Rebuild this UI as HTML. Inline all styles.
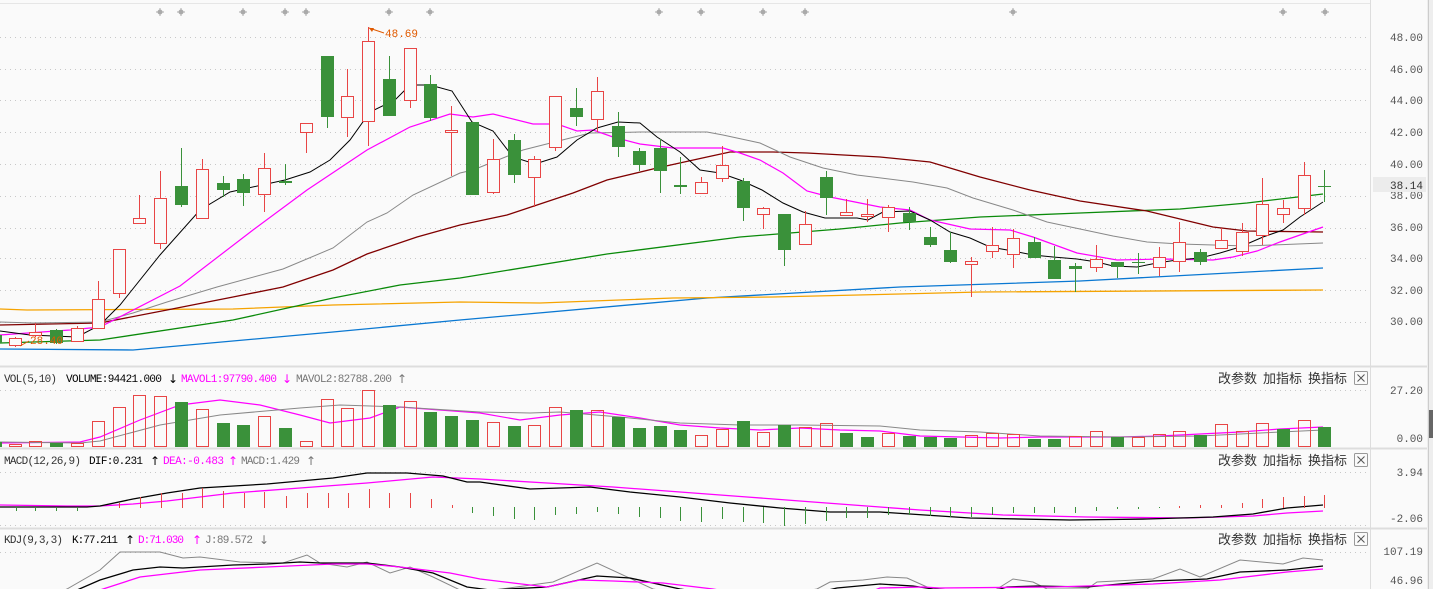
<!DOCTYPE html>
<html><head><meta charset="utf-8"><style>
html,body{margin:0;padding:0;background:#fafafa;width:1433px;height:589px;overflow:hidden}
svg{display:block}
text{font-family:"Liberation Mono","Noto Sans CJK SC",monospace;font-size:11px}
.cn{font-family:"Liberation Sans","Noto Sans CJK SC",sans-serif;font-size:13px;fill:#333}
.ax{fill:#555;text-anchor:end}
.ar{font-family:"DejaVu Sans",sans-serif;font-size:12px}
</style></head><body>
<svg id="s" width="1433" height="589" xmlns="http://www.w3.org/2000/svg">
<rect width="1433" height="589" fill="#fafafa"/>
<line x1="0" y1="3.5" x2="1370" y2="3.5" stroke="#e6e6e6"/>
<g id="grid" stroke="#c8c8c8" stroke-dasharray="1,4"></g>
<line x1="1370.5" y1="0" x2="1370.5" y2="589" stroke="#ddd"/>
<line x1="0" y1="366.5" x2="1428" y2="366.5" stroke="#ddd" stroke-width="2"/>
<line x1="0" y1="448.5" x2="1428" y2="448.5" stroke="#ddd" stroke-width="2"/>
<line x1="0" y1="528.5" x2="1428" y2="528.5" stroke="#ddd" stroke-width="2"/>
<rect x="1427" y="0" width="6" height="589" fill="#eee"/>
<line x1="1428.5" y1="0" x2="1428.5" y2="589" stroke="#ccc"/>
<rect x="1429" y="410" width="4" height="28" fill="#666"/>
<g id="lines" fill="none"></g>
<g id="cand"></g>
<g class="ax">
<text x="1423" y="41">48.00</text><text x="1423" y="73">46.00</text><text x="1423" y="104">44.00</text>
<text x="1423" y="136">42.00</text><text x="1423" y="168">40.00</text><text x="1423" y="199">38.00</text>
<text x="1423" y="231">36.00</text><text x="1423" y="262">34.00</text><text x="1423" y="294">32.00</text>
<text x="1423" y="325">30.00</text>
<text x="1423" y="394">27.20</text><text x="1423" y="442">0.00</text>
<text x="1423" y="476">3.94</text><text x="1423" y="522">-2.06</text>
<text x="1423" y="555">107.19</text><text x="1423" y="584">46.96</text>
</g>
<rect x="1373" y="177" width="53" height="15" fill="#ececec"/>
<text x="1423" y="189" style="text-anchor:end;fill:#333">38.14</text>
<line x1="369" y1="28" x2="384" y2="33" stroke="#e05a00"/>
<path d="M369 28 l5 0 l-2 4z" fill="#e05a00"/>
<text x="385" y="37" fill="#e05a00">48.69</text>
<text x="30" y="344" fill="#e05a00">28.40</text>
<line x1="20" y1="346" x2="29" y2="341" stroke="#e05a00"/>
<text x="4" y="382" fill="#333" textLength="53" lengthAdjust="spacing">VOL(5,10)</text>
<text x="66" y="382" fill="#000" textLength="96" lengthAdjust="spacing">VOLUME:94421.000</text><text class="ar" x="168" y="383" fill="#000">↓</text>
<text x="181" y="382" fill="#f0f" textLength="96" lengthAdjust="spacing">MAVOL1:97790.400</text><text class="ar" x="282" y="383" fill="#f0f">↓</text>
<text x="296" y="382" fill="#777" textLength="96" lengthAdjust="spacing">MAVOL2:82788.200</text><text class="ar" x="397" y="383" fill="#777">↑</text>
<text x="4" y="464" fill="#333" textLength="77" lengthAdjust="spacing">MACD(12,26,9)</text>
<text x="89" y="464" fill="#000" textLength="54" lengthAdjust="spacing">DIF:0.231</text><text class="ar" x="150" y="465" fill="#000">↑</text>
<text x="163" y="464" fill="#f0f" textLength="61" lengthAdjust="spacing">DEA:-0.483</text><text class="ar" x="228" y="465" fill="#f0f">↑</text>
<text x="241" y="464" fill="#777" textLength="59" lengthAdjust="spacing">MACD:1.429</text><text class="ar" x="306" y="465" fill="#777">↑</text>
<text x="4" y="543" fill="#333" textLength="59" lengthAdjust="spacing">KDJ(9,3,3)</text>
<text x="72" y="543" fill="#000" textLength="46" lengthAdjust="spacing">K:77.211</text><text class="ar" x="125" y="544" fill="#000">↑</text>
<text x="138" y="543" fill="#f0f" textLength="46" lengthAdjust="spacing">D:71.030</text><text class="ar" x="192" y="544" fill="#f0f">↑</text>
<text x="205" y="543" fill="#777" textLength="48" lengthAdjust="spacing">J:89.572</text><text class="ar" x="259" y="544" fill="#777">↓</text>
<g id="btns"></g>
</svg>
<script>
var NS="http://www.w3.org/2000/svg",S=document.getElementById('s');
function el(p,t,a,txt){var e=document.createElementNS(NS,t);for(var k in a)e.setAttribute(k,a[k]);if(txt)e.textContent=txt;p.appendChild(e);return e;}
var G=document.getElementById('grid');
[37,69,100,132,164,196,228,258,290,322,390,472,525,552].forEach(function(y){el(G,'line',{x1:0,y1:y+.5,x2:1370,y2:y+.5});});
var B=document.getElementById('btns');
[[378,383],[460,465],[539,544]].forEach(function(r){
 el(B,'text',{x:1218,y:r[1],'class':'cn'},'改参数');
 el(B,'text',{x:1263,y:r[1],'class':'cn'},'加指标');
 el(B,'text',{x:1308,y:r[1],'class':'cn'},'换指标');
 el(B,'rect',{x:1354.5,y:r[0]-6.5,width:13,height:13,fill:'#fafafa',stroke:'#999',rx:1});
 el(B,'path',{d:'M1357.5 '+(r[0]-3.5)+'l7 7m0 -7l-7 7',stroke:'#555'});
});
[160,181,243,285,306,389,430,659,701,763,805,1013,1283,1325].forEach(function(x){
 el(B,'circle',{cx:x,cy:12,r:2.5,fill:'#aaa'});
 el(B,'path',{d:'M'+(x-4)+' 12h8M'+x+' 8v8',stroke:'#aaa'});
});
var L=document.getElementById('lines');
function pl(pts,c,w){el(L,'polyline',{points:pts,stroke:c,'stroke-width':w||1});}
pl("0,349 133,350 333,332 460,320 707,298 900,287 1080,281 1323,268","#0a78d2",1.3);
pl("0,309 27,310 233,309 333,305 460,302 540,303 673,298 773,297 900,294 980,292 1323,290","#f5a300",1.3);
pl("0,343 100,340 233,320 333,298 400,285 460,278 607,254 740,237 840,229 900,223 980,217 1080,213 1180,209 1247,203 1323,194","#0a8a0a",1.3);
pl("0,325 100,323 167,310 233,297 283,287 333,270 367,254 417,237 460,225 507,215 573,193 607,180 657,168 707,157 730,152 773,152 807,153 880,157 930,162 980,177 1030,190 1080,201 1147,211 1213,227 1247,231 1323,232","#800000",1.3);
pl("0,322 33,323 100,322 133,313 167,302 217,287 283,269 333,248 367,222 387,213 413,195 460,173 473,170 523,150 590,133 640,132 707,132 723,135 760,143 790,157 823,168 857,175 913,182 947,188 973,198 1013,210 1047,222 1080,229 1113,236 1147,242 1180,244 1247,246 1323,243","#888",1);
pl("0,335 70,330 100,327 180,286 253,230 307,190 367,150 410,127 450,114 473,117 493,114 533,124 557,124 577,131 593,130 613,137 640,144 673,148 723,148 740,153 760,160 783,173 807,191 830,197 860,203 880,207 910,210 930,220 970,229 1010,230 1033,237 1077,253 1117,260 1163,259 1213,260 1233,257 1257,251 1280,242 1300,235 1323,227","#f0f",1.2);
pl("0,331 30,335 77,337 100,325 120,305 160,255 200,210 230,192 285,180 310,172 330,160 350,140 370,112 395,100 410,85 430,85 452,91 472,122 493,131 513,157 535,164 557,157 577,140 597,128 618,122 640,123 657,137 680,152 700,170 720,173 740,180 762,190 783,203 803,212 825,218 857,218 868,220 883,212 910,211 930,220 950,232 970,238 990,247 1013,251 1033,255 1053,257 1077,259 1097,262 1113,266 1137,267 1157,263 1177,260 1200,258 1220,253 1240,247 1263,237 1283,230 1300,217 1323,202","#000",1);
pl("0,443 80,442 100,437 140,420 180,405 220,400 260,405 300,415 330,423 370,418 400,407 440,410 480,413 520,420 560,415 600,412 640,418 680,425 720,428 760,430 800,428 840,430 880,431 920,436 960,437 1000,438 1040,437 1080,437 1120,437 1160,436 1200,434 1240,432 1280,429 1323,427","#f0f",1.2);
pl("0,442 80,443 100,441 160,425 220,415 300,408 340,405 400,407 480,412 530,413 560,412 620,417 680,423 740,425 800,425 880,426 920,430 980,432 1040,436 1120,437 1200,436 1260,433 1323,430","#888",1);
pl("0,505 67,506 100,506 133,504 167,501 233,493 300,488 367,483 433,477 480,479 547,483 613,487 680,492 747,497 813,502 880,507 920,510 1003,515 1087,517 1187,518 1253,516 1287,513 1323,511","#f0f",1.3);
pl("0,507 87,507 100,506 133,499 167,493 200,488 267,484 333,478 367,473 407,473 443,476 467,482 480,482 530,489 590,487 630,492 680,497 730,503 780,508 830,512 880,512 940,516 970,518 1070,520 1147,519 1213,517 1253,514 1287,508 1323,505","#000",1.3);
pl("60,592 67,589 100,570 120,552 160,552 183,558 200,557 240,562 283,563 307,555 320,563 347,567 367,562 390,573 410,567 433,577 460,590 480,592 553,582 597,563 653,589 670,592 800,592 817,589 830,582 863,580 887,577 907,578 927,587 940,592 990,592 997,589 1013,579 1033,582 1047,589 1087,589 1097,582 1153,579 1180,569 1200,577 1240,560 1283,564 1303,558 1323,560","#888",1);
pl("70,592 77,590 100,580 133,570 160,567 183,568 233,565 267,564 300,562 320,563 367,563 400,567 433,573 467,587 490,590 547,587 597,576 630,578 680,589 700,592 820,592 837,588 880,584 913,586 933,589 990,592 1007,587 1037,586 1087,587 1153,581 1207,579 1240,572 1287,570 1323,566","#000",1.3);
pl("95,592 100,590 140,577 200,570 267,567 333,564 367,564 400,567 450,573 480,579 513,583 547,587 580,580 613,581 663,583 713,589 730,592 870,592 880,588 923,587 940,588 1053,587 1153,584 1220,580 1287,572 1323,569","#f0f",1.3);
var R="#e84545",GR="#3a913a",C=document.getElementById('cand');
var cd=[[-5,335,343,333,345,'g'],[15,338,345,337,347,'r'],[35,332,335,323,337,'r'],[56,330,343,329,344,'g'],[77,328,341,326,342,'r'],[98,299,328,281,329,'r'],[119,249,293,249,298,'r'],[139,218,223,195,223,'r'],[160,198,243,171,249,'r'],[181,186,205,148,207,'g'],[202,169,218,159,218,'r'],[223,183,190,176,197,'g'],[243,179,193,174,206,'g'],[264,168,194,153,212,'r'],[285,181,183,164,185,'g'],[306,123,132,123,153,'r'],[327,56,117,56,128,'g'],[347,96,117,69,137,'r'],[368,41,121,27,146,'r'],[389,79,116,56,116,'g'],[410,48,100,48,108,'r'],[430,84,118,75,121,'g'],[451,130,132,106,176,'r'],[472,122,195,122,195,'g'],[493,159,192,139,194,'r'],[514,140,175,134,183,'g'],[534,159,177,156,207,'r'],[555,96,147,96,151,'r'],[576,108,117,88,126,'g'],[597,91,119,77,132,'r'],[618,126,147,112,157,'g'],[639,151,165,148,171,'g'],[660,148,171,139,193,'g'],[680,185,187,157,194,'g'],[701,182,193,177,193,'r'],[722,165,178,146,182,'r'],[743,181,208,178,221,'g'],[763,208,214,207,229,'r'],[784,214,250,214,266,'g'],[805,224,244,211,244,'r'],[826,177,198,171,215,'g'],[846,212,215,199,215,'r'],[867,214,216,199,222,'r'],[888,207,217,205,232,'r'],[909,213,222,207,230,'g'],[930,237,245,227,247,'g'],[950,250,262,232,263,'g'],[971,261,264,257,297,'r'],[992,245,251,227,258,'r'],[1013,238,254,229,268,'r'],[1034,242,258,237,258,'g'],[1054,260,279,246,279,'g'],[1075,266,269,263,292,'g'],[1096,259,267,245,272,'r'],[1117,262,267,262,278,'g'],[1138,262,263,253,274,'g'],[1159,257,267,247,276,'r'],[1179,242,261,222,272,'r'],[1200,252,262,249,265,'g'],[1221,240,248,228,248,'r'],[1242,232,251,223,256,'r'],[1262,204,235,178,245,'r'],[1283,208,214,200,223,'r'],[1304,175,208,162,215,'r'],[1324,186,187,170,202,'g']];
cd.forEach(function(c){var x=c[0],col=c[5]=='r'?R:GR;
 el(C,'line',{x1:x+.5,y1:c[3],x2:x+.5,y2:c[4],stroke:col});
 var h=Math.max(c[2]-c[1],1);
 if(c[5]=='r') el(C,'rect',{x:x-5.5,y:c[1]+.5,width:12,height:Math.max(h,1),fill:'#fafafa',stroke:col});
 else el(C,'rect',{x:x-6,y:c[1],width:13,height:h,fill:col});
});
var vt=[[-5,442,'g'],[15,444,'r'],[35,441,'r'],[56,443,'g'],[77,443,'r'],[98,421,'r'],[119,407,'r'],[139,395,'r'],[160,396,'r'],[181,402,'g'],[202,409,'r'],[223,423,'g'],[243,425,'g'],[264,416,'r'],[285,428,'g'],[306,441,'r'],[327,399,'r'],[347,408,'r'],[368,390,'r'],[389,405,'g'],[410,401,'r'],[430,412,'g'],[451,416,'g'],[472,420,'g'],[493,422,'r'],[514,426,'g'],[534,425,'r'],[555,407,'r'],[576,410,'g'],[597,410,'r'],[618,417,'g'],[639,428,'g'],[660,426,'g'],[680,430,'g'],[701,435,'r'],[722,429,'r'],[743,421,'g'],[763,432,'r'],[784,425,'g'],[805,427,'r'],[826,423,'r'],[846,433,'g'],[867,437,'g'],[888,433,'r'],[909,436,'g'],[930,437,'g'],[950,438,'g'],[971,435,'r'],[992,433,'r'],[1013,434,'r'],[1034,439,'g'],[1054,439,'g'],[1075,436,'r'],[1096,431,'r'],[1117,437,'g'],[1138,437,'r'],[1159,434,'r'],[1179,431,'r'],[1200,435,'g'],[1221,424,'r'],[1242,431,'r'],[1262,423,'r'],[1283,429,'g'],[1304,420,'r'],[1324,427,'g']];
vt.forEach(function(v){var x=v[0];
 if(v[2]=='r') el(C,'rect',{x:x-5.5,y:v[1]+.5,width:12,height:446-v[1],fill:'none',stroke:R});
 else el(C,'rect',{x:x-6,y:v[1],width:13,height:447-v[1],fill:GR});
});
var mb=[[16,511],[35,511],[56,511],[77,511],[119,503],[140,497],[161,493],[182,493],[202,488],[223,491],[244,493],[264,492],[286,496],[307,493],[328,493],[348,493],[369,489],[389,493],[410,493],[431,499],[452,505],[472,513],[493,516],[514,519],[534,520],[555,515],[576,514],[597,512],[618,514],[639,517],[660,518],[680,521],[701,522],[722,519],[743,522],[763,523],[784,526],[805,524],[826,521],[846,518],[867,518],[888,515],[909,515],[930,516],[950,517],[971,517],[992,515],[1013,513],[1034,513],[1054,513],[1075,513],[1096,511],[1117,509],[1138,509],[1159,508],[1179,506],[1200,505],[1221,505],[1242,503],[1262,499],[1283,497],[1304,496],[1324,495]];
mb.forEach(function(m){var up=m[1]<507.5;
 el(C,'line',{x1:m[0]+.5,y1:up?m[1]:507,x2:m[0]+.5,y2:up?508:m[1],stroke:up?R:GR});
});
</script>
</body></html>
